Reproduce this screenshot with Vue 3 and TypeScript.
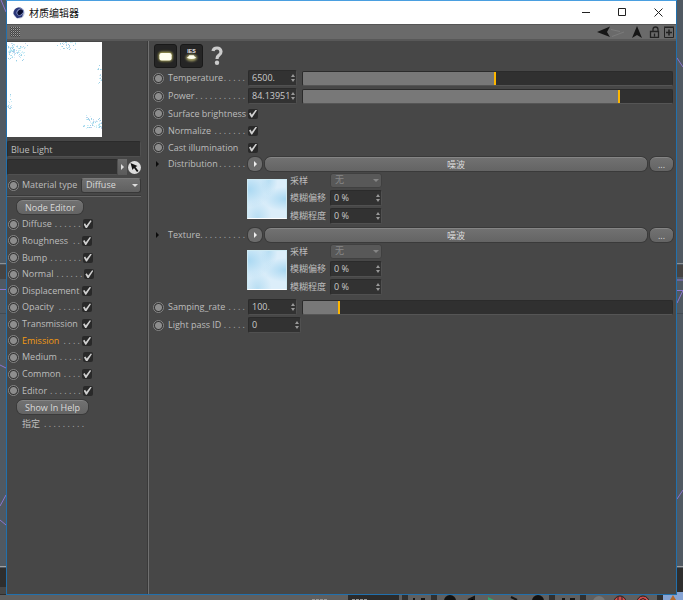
<script setup lang="ts">
import { computed, reactive, ref } from 'vue'

interface Channel {
  name: string
  dots: number
  on: boolean
}
interface TextureSlot {
  name: string
  dots: number
  shader: string
  sampling: string
  offset: string
  scale: string
}

const materialName = ref('Blue Light')
const layerName = ref('')
const materialType = ref('Diffuse')
const active = ref('Emission')

const channels = reactive<Channel[]>([
  { name: 'Diffuse', dots: 6, on: true },
  { name: 'Roughness', dots: 2, on: true },
  { name: 'Bump', dots: 7, on: true },
  { name: 'Normal', dots: 6, on: true },
  { name: 'Displacement', dots: 0, on: true },
  { name: 'Opacity', dots: 5, on: true },
  { name: 'Transmission', dots: 0, on: true },
  { name: 'Emission', dots: 4, on: true },
  { name: 'Medium', dots: 5, on: true },
  { name: 'Common', dots: 4, on: true },
  { name: 'Editor', dots: 7, on: true },
])

const levels = reactive([
  { name: 'Temperature', dots: 5, value: '6500.', level: 52 },
  { name: 'Power', dots: 11, value: '84.13951', level: 85.8 },
])
const flags = reactive([
  { name: 'Surface brightness', dots: 0, on: true },
  { name: 'Normalize', dots: 7, on: true },
  { name: 'Cast illumination', dots: 0, on: true },
])
const slots = reactive<TextureSlot[]>([
  { name: 'Distribution', dots: 6, shader: '噪波', sampling: '无', offset: '0 %', scale: '0 %' },
  { name: 'Texture', dots: 10, shader: '噪波', sampling: '无', offset: '0 %', scale: '0 %' },
])
const rate = reactive({ value: '100.', level: 9.5 })
const passId = ref('0')

const leader = (n: number): string => Array(n).fill('.').join(' ')

// Render noise of the preview: clusters of blue grains near the edges.
const grains = computed(() => {
  let seed = 7411
  const rnd = () => {
    seed = (seed * 16807) % 2147483647
    return seed / 2147483647
  }
  const colors = ['#a3dbee', '#c4ebf5', '#9ccde6', '#d3f3f8', '#e0f0fb', '#c0d4ee']
  const out: { x: number; y: number; c: string }[] = []
  const cluster = (n: number, x: number, y: number, w: number, h: number, cx: number, cy: number) => {
    for (let i = 0; i < n; i++) {
      const f = Math.sqrt(rnd())
      out.push({
        x: Math.round(x + w * (cx + (rnd() - cx) * f)),
        y: Math.round(y + h * (cy + (rnd() - cy) * f)),
        c: colors[Math.floor(rnd() * colors.length)],
      })
    }
  }
  cluster(130, 0, 0, 22, 20, 0.1, 0.3)
  cluster(34, 46, 0, 26, 8, 0.7, 0)
  cluster(28, 89, 22, 5, 22, 1, 0.6)
  cluster(80, 72, 72, 22, 15, 1, 0.8)
  cluster(20, 0, 45, 9, 26, 0, 0.7)
  return out
})
</script>

<template>
  <div class="desktop">
    <svg class="edge edge-left" viewBox="0 0 6 595" preserveAspectRatio="xMinYMin slice" aria-hidden="true">
      <rect width="6" height="600" fill="#505962" />
      <path d="M1 0L6 12M0 365l6 3M0 506l6-11M0 520l6 5" stroke="#8a76cf" fill="none" />
      <path d="M0 263.500h6" stroke="#8c9094" />
      <rect y="265" width="6" height="14" fill="#464443" />
      <path d="M0 289.500h6" stroke="#8a76cf" />
      <path d="M0 313.500h6" stroke="#434b53" />
      <path d="M0 566.500h6" stroke="#a0a0a0" />
      <rect y="568" width="6" height="27" fill="#2e2e2e" />
      <rect y="587" width="6" height="7" fill="#464646" />
    </svg>

    <main class="window">
      <header class="titlebar">
        <svg class="logo" viewBox="0 0 12 12" aria-hidden="true">
          <circle cx="6" cy="6" r="5.600" fill="#b9c0d6" />
          <path d="M.6 7A5.600 5.600 0 0 1 8 .8L11 4 9 10 4 11.200z" fill="#2b3778" />
          <ellipse cx="7.200" cy="5" rx="4" ry="3.200" fill="#8e9ccc" transform="rotate(-45 7.200 5)" />
          <ellipse cx="7.200" cy="5.200" rx="3.200" ry="2.300" fill="#080d32" transform="rotate(-45 7.200 5.200)" />
        </svg>
        <h1>材质编辑器</h1>
        <div class="window-buttons">
          <button type="button" aria-label="最小化"><svg viewBox="0 0 9 9"><path d="M0 4.500h8" /></svg></button>
          <button type="button" aria-label="最大化"><svg viewBox="0 0 9 9"><path d="M.5.5h7v7h-7z" /></svg></button>
          <button type="button" aria-label="关闭"><svg viewBox="0 0 9 9"><path d="M.5.5l8 8M8.500.5l-8 8" /></svg></button>
        </div>
      </header>

      <div class="toolbar">
        <span class="grip"></span>
        <div class="tools">
          <button type="button" aria-label="后退">
            <svg width="28" height="12" viewBox="0 0 28 12"><path d="M0 6L13 .5 10 6l3 5z" fill="#161616" /><path d="M14 3.500l9 2M15 10.500L27 6" stroke="#7b7b7b" fill="none" /></svg>
          </button>
          <button type="button" aria-label="向上">
            <svg width="12" height="12" viewBox="0 0 12 12"><path d="M6 0l5 12-5-3-5 3z" fill="#161616" /></svg>
          </button>
          <button type="button" aria-label="锁定">
            <svg width="11" height="12" viewBox="0 0 11 12" fill="none" stroke="#222"><path d="M1.500 5.500h8v6h-8zM4 5V3.500a2.500 2.500 0 0 1 5 0V5M5.500 7.500v3" stroke-width="1.300" /></svg>
          </button>
          <button type="button" aria-label="新建窗口">
            <svg width="10" height="12" viewBox="0 0 10 12" fill="none" stroke="#222"><path d="M.5 1.500h9v10h-9zM0 1h10" /><path d="M2 6.500h6M5 3.500v6" stroke-width="1.600" /></svg>
          </button>
        </div>
      </div>

      <div class="body">
        <aside class="side">
          <svg class="preview" viewBox="0 0 95 95" role="img" aria-label="Blue Light">
            <rect width="95" height="95" fill="#fff" />
            <rect v-for="(g, i) in grains" :key="i" :x="g.x" :y="g.y" width="1" height="1" :fill="g.c" />
          </svg>
          <input v-model="materialName" class="well name" type="text" aria-label="Name" />
          <div class="layer">
            <input v-model="layerName" class="well" type="text" aria-label="Layer" />
            <button class="layer-menu" type="button" aria-label="Layer menu"><svg width="3" height="6" viewBox="0 0 3 6"><path d="M0 0l3 3-3 3z" fill="#ddd" /></svg></button>
            <button class="picker" type="button" aria-label="Pick layer">
              <svg width="13" height="13" viewBox="0 0 13 13"><circle cx="6.500" cy="6.500" r="6.500" fill="#ddd" /><path d="M2.500 2l7 3-2 1 3 4-1.500 1-3-4L4.500 9z" fill="#111" /></svg>
            </button>
          </div>
          <div class="type-row">
            <i class="knob"></i>
            <label for="material-type">Material type</label>
            <span class="select">
              <select id="material-type" v-model="materialType"><option>Diffuse</option><option>Glossy</option></select>
              <svg class="caret" viewBox="0 0 6 3"><path d="M0 0h6L3 3z" /></svg>
            </span>
          </div>
          <hr />
          <button class="pill node" type="button">Node Editor</button>
          <div class="channels">
            <div v-for="(c, i) in channels" :key="c.name" class="channel" :class="{ active: c.name === active }">
              <i class="knob"></i>
              <label :for="`channel-${i}`">{{ c.name }}</label>
              <span v-if="c.dots" class="dots">{{ leader(c.dots) }}</span>
              <input :id="`channel-${i}`" v-model="c.on" class="tick" type="checkbox" />
            </div>
          </div>
          <button class="pill help" type="button">Show In Help</button>
          <div class="assign"><span>指定</span><span class="dots">{{ leader(9) }}</span></div>
        </aside>

        <section class="props">
          <div class="kinds">
            <button class="kind" type="button" aria-label="Blackbody">
              <svg viewBox="0 0 24 24">
                <defs><filter id="glow" x="-50%" y="-50%" width="200%" height="200%"><feGaussianBlur stdDeviation="1.500" /></filter></defs>
                <rect x="4" y="7" width="16" height="11" rx="4" fill="#a9a455" filter="url(#glow)" />
                <rect x="5" y="8.500" width="14" height="8.500" rx="2.500" fill="#fffff0" />
              </svg>
            </button>
            <button class="kind" type="button" aria-label="IES">
              <svg viewBox="0 0 24 24">
                <ellipse cx="12" cy="14" rx="6.500" ry="4" fill="#a39e65" filter="url(#glow)" />
                <path d="M6.500 14q1.500-.5 3-3h5q1.500 2.500 3 3-5.500 3-11 0z" fill="#fffff0" />
                <text x="12" y="8" text-anchor="middle">IES</text>
              </svg>
            </button>
            <button class="question" type="button" aria-label="Help">
              <svg viewBox="0 0 12 20"><path d="M2 5Q2.500 2 6 2t4 3.500Q10 8 8 9.200 6 10.500 6 13" fill="none" stroke="#ccc" stroke-width="3.200" /><circle cx="6" cy="16.800" r="2.200" fill="#ccc" /></svg>
            </button>
          </div>

          <div v-for="(l, i) in levels" :key="l.name" class="row">
            <i class="knob"></i>
            <div class="caption"><label :for="`level-${i}`">{{ l.name }}</label><span class="dots">{{ leader(l.dots) }}</span></div>
            <span class="number">
              <input :id="`level-${i}`" v-model="l.value" type="text" />
              <svg viewBox="0 0 4 8"><path d="M0 3l2-3 2 3zM0 5h4L2 8z" /></svg>
            </span>
            <input v-model.number="l.level" class="slider" type="range" min="0" max="100" step="0.1" :aria-label="l.name" :style="{ '--level': l.level + '%' }" />
          </div>

          <div v-for="(f, i) in flags" :key="f.name" class="row flag">
            <i class="knob"></i>
            <div class="caption"><label :for="`flag-${i}`">{{ f.name }}</label><span v-if="f.dots" class="dots">{{ leader(f.dots) }}</span></div>
            <input :id="`flag-${i}`" v-model="f.on" class="tick" type="checkbox" />
          </div>

          <div v-for="(s, i) in slots" :key="s.name" class="slot">
            <div class="row head">
              <svg class="expander" viewBox="0 0 3 6"><path d="M0 0l3 3-3 3z" fill="#0c0c0c" /></svg>
              <div class="caption"><span>{{ s.name }}</span><span class="dots">{{ leader(s.dots) }}</span></div>
              <button class="round" type="button" :aria-label="`${s.name} menu`"><svg width="3" height="6" viewBox="0 0 3 6"><path d="M0 0l3 3-3 3z" fill="#eee" /></svg></button>
              <button class="pill shader" type="button">{{ s.shader }}</button>
              <button class="pill more" type="button">...</button>
            </div>
            <div class="detail">
              <div class="swatch"></div>
              <div class="fields">
                <label :for="`sampling-${i}`">采样</label>
                <span class="select off">
                  <select :id="`sampling-${i}`" v-model="s.sampling" disabled><option>无</option></select>
                  <svg class="caret" viewBox="0 0 6 3"><path d="M0 0h6L3 3z" /></svg>
                </span>
                <label :for="`offset-${i}`">模糊偏移</label>
                <span class="number">
                  <input :id="`offset-${i}`" v-model="s.offset" type="text" />
                  <svg viewBox="0 0 4 8"><path d="M0 3l2-3 2 3zM0 5h4L2 8z" /></svg>
                </span>
                <label :for="`scale-${i}`">模糊程度</label>
                <span class="number">
                  <input :id="`scale-${i}`" v-model="s.scale" type="text" />
                  <svg viewBox="0 0 4 8"><path d="M0 3l2-3 2 3zM0 5h4L2 8z" /></svg>
                </span>
              </div>
            </div>
          </div>

          <div class="row">
            <i class="knob"></i>
            <div class="caption"><label for="rate">Samping_rate</label><span class="dots">{{ leader(4) }}</span></div>
            <span class="number">
              <input id="rate" v-model="rate.value" type="text" />
              <svg viewBox="0 0 4 8"><path d="M0 3l2-3 2 3zM0 5h4L2 8z" /></svg>
            </span>
            <input v-model.number="rate.level" class="slider" type="range" min="0" max="100" step="0.1" aria-label="Samping_rate" :style="{ '--level': rate.level + '%' }" />
          </div>
          <div class="row">
            <i class="knob"></i>
            <div class="caption"><label for="pass-id">Light pass ID</label><span class="dots">{{ leader(5) }}</span></div>
            <span class="number wide">
              <input id="pass-id" v-model="passId" type="text" />
              <svg viewBox="0 0 4 8"><path d="M0 3l2-3 2 3zM0 5h4L2 8z" /></svg>
            </span>
          </div>
        </section>
      </div>
    </main>

    <svg class="edge edge-right" viewBox="0 0 6 595" preserveAspectRatio="xMinYMin slice" aria-hidden="true">
      <rect width="6" height="600" fill="#505962" />
      <path d="M0 58l6 9M0 280h6M0 290.500h6L0 303M0 499l6-9" stroke="#8a76cf" fill="none" />
      <path d="M0 263.500h6" stroke="#8c9094" />
      <rect y="265" width="6" height="12" fill="#464443" />
      <path d="M0 313.500h6" stroke="#434b53" />
      <path d="M0 566.500h6" stroke="#a0a0a0" />
      <rect y="568" width="6" height="24" fill="#2e2e2e" />
      <rect y="592" width="6" height="3" fill="#86a4d4" />
    </svg>

    <svg class="strip" viewBox="0 0 683 5" preserveAspectRatio="xMaxYMax slice" aria-hidden="true">
      <rect width="683" height="5" fill="#5f5f5f" />
      <rect x="348" width="51" height="5" fill="#2b2b2b" />
      <path d="M312 4.500h16M352 4.500h16" stroke="#999" stroke-dasharray="3 1" />
      <path d="M405 0v5M434 0v5M552 0v5M583 0v5M660 0v5" stroke="#303030" stroke-width="6" />
      <path d="M413 4h2m6 0h4M468 5l6-3v3M511 2l6 3M562 4h3m5 0h5" stroke="#151515" stroke-width="2" />
      <circle cx="450" cy="6" r="6" fill="#111" /><circle cx="538" cy="6" r="6" fill="#111" />
      <path d="M488 2l6 3h-6z" fill="#35a36c" />
      <circle cx="599" cy="7" r="6" fill="#777" />
      <circle cx="620" cy="7" r="6" fill="#d04a4a" stroke="#222" /><circle cx="643" cy="7" r="6" fill="#d04a4a" stroke="#222" />
      <path d="M618 5V2M622 5V2M640 5q3-3 6 0" stroke="#222" fill="none" />
      <rect x="663" width="20" height="5" fill="#86a4d4" /><path d="M673 0l3 5h-6z" fill="#b36a2e" />
    </svg>
  </div>
</template>

<style>
body {
  background: #505962;
}
</style>

<style scoped>
* {
  box-sizing: border-box;
}
.desktop {
  min-height: 100vh;
  display: grid;
  grid-template: 1fr 5px / 6px minmax(0, 1fr) 6px;
  font: 9px/12px 'Open Sans', 'Noto Sans CJK SC', sans-serif;
  color: #bdbdbd;
}
.edge {
  width: 6px;
  height: 0;
  min-height: 100%;
  grid-row: 1;
}
.edge-left {
  grid-column: 1;
}
.edge-right {
  grid-column: 3;
}
.strip {
  grid-column: 1 / -1;
  width: 100%;
  height: 5px;
}
.window {
  grid-row: 1;
  grid-column: 2;
  display: flex;
  flex-direction: column;
  border: 1px solid #2170ad;
  border-top-color: #4a9fe0;
  background: #474747;
}
button,
input,
select {
  font: inherit;
  color: inherit;
  margin: 0;
  padding: 0;
  border: 0;
  background: none;
  min-width: 0;
}
svg {
  display: block;
}
.titlebar {
  height: 23px;
  display: flex;
  align-items: center;
  gap: 4px;
  padding-left: 6px;
  background: #fff;
  color: #111;
}
.logo {
  width: 12px;
  height: 12px;
}
h1 {
  margin: 0;
  font: 10px/14px 'Noto Sans CJK SC', sans-serif;
}
.window-buttons {
  margin-left: auto;
  display: flex;
}
.window-buttons button {
  width: 36px;
  height: 23px;
  display: grid;
  place-items: center;
}
.window-buttons svg {
  width: 9px;
  height: 9px;
  fill: none;
  stroke: #222;
}
.toolbar {
  height: 17px;
  display: flex;
  align-items: center;
  justify-content: space-between;
  padding: 0 2px 0 3px;
  background: #6a6a6a;
  border-top: 1px solid #555;
  border-bottom: 2px solid #585858;
}
.grip {
  width: 10px;
  height: 10px;
  background: conic-gradient(#a0a0a0 25%, #454545 0 50%, #6a6a6a 0 75%, #454545 0) 0 0 / 2px 2px;
}
.tools {
  display: flex;
  align-items: center;
  gap: 4px;
}
.tools button:nth-child(2) {
  margin: 0 2px;
}
.body {
  flex: 1;
  display: flex;
}
.side {
  width: 142px;
  flex: none;
  border-right: 1px solid #707070;
  box-shadow: inset -1px 0 #3a3a3a;
  padding: 1px 7px 8px 0;
  display: flex;
  flex-direction: column;
  align-items: flex-start;
}
.preview {
  width: 95px;
  height: 95px;
}
.well {
  height: 16px;
  padding: 0 3px;
  background: #323232;
  border: 1px solid #2b2b2b;
  border-right-color: #505050;
  border-bottom-color: #505050;
  border-radius: 2px;
}
.name {
  width: 100%;
  margin: 4px 0 2px;
}
.layer {
  width: 100%;
  display: flex;
  align-items: center;
}
.layer .well {
  flex: 1;
}
.layer-menu {
  width: 9px;
  height: 16px;
  display: grid;
  place-items: center;
  background: linear-gradient(#6c6c6c, #5a5a5a);
}
.picker {
  margin-left: 1px;
}
.type-row {
  width: 100%;
  height: 20px;
  display: flex;
  align-items: center;
  gap: 3px;
  padding-left: 1px;
  white-space: nowrap;
}
.knob {
  width: 11px;
  height: 11px;
  flex: none;
  border-radius: 50%;
  border: 1px solid #858585;
  background: radial-gradient(circle, #8d8d8d 3px, #333 4px);
}
.select {
  position: relative;
  display: block;
  width: 60px;
  height: 15px;
  margin-left: auto;
}
.select select {
  display: block;
  width: 100%;
  height: 100%;
  padding: 0 12px 1px 4px;
  appearance: none;
  border-radius: 3px;
  background: linear-gradient(#707070, #606060);
  border: 1px solid #383838;
  border-top-color: #7a7a7a;
  color: #dadada;
  opacity: 1;
}
.caret {
  position: absolute;
  right: 3px;
  top: 6px;
  width: 6px;
  height: 3px;
  fill: #ddd;
  pointer-events: none;
}
.select.off {
  width: 52px;
  margin: 0;
}
.select.off select {
  background: #585858;
  border-color: #404040;
  color: #878787;
}
.select.off .caret {
  fill: #858585;
}
hr {
  width: 100%;
  height: 2px;
  margin: 0 0 3px;
  border: 0;
  border-top: 1px solid #3a3a3a;
  border-bottom: 1px solid #666;
}
.pill {
  height: 14px;
  padding: 0 8px;
  line-height: 12px;
  border-radius: 6px;
  background: linear-gradient(#717171, #646464);
  border-top: 1px solid #858585;
  box-shadow: 0 0 0 1px #3a3a3a;
  color: #dadada;
}
.node {
  margin-left: 10px;
}
.channels {
  width: 85px;
  height: 183px;
  margin: 2px 0 1px;
  padding-left: 1px;
  display: grid;
  grid-template-columns: minmax(0, 1fr);
  grid-auto-rows: 1fr;
}
.channel {
  display: flex;
  align-items: center;
  gap: 3px;
  white-space: nowrap;
}
.caption .dots {
  margin-left: auto;
}
.channel label {
  margin-right: auto;
}
.channel .tick {
  margin-left: -1px;
}
.active label {
  color: #f39a12;
}
.help {
  margin-left: 10px;
}
.assign {
  display: flex;
  gap: 4px;
  margin: 4px 0 0 15px;
}
.dots {
  white-space: pre;
  color: #a8a8a8;
}
.tick {
  appearance: none;
  width: 10px;
  height: 10px;
  flex: none;
  display: grid;
  place-items: center;
  background: #292929;
  border-radius: 2px;
}
.tick:checked::before {
  content: '';
  width: 8px;
  height: 8px;
  background: #d0d0d0;
  clip-path: polygon(0 50%, 18% 38%, 35% 65%, 85% 0, 100% 8%, 40% 100%, 28% 100%);
}
.props {
  flex: 1;
  min-width: 0;
  padding: 3px 3px 8px 4px;
}
.kinds {
  display: flex;
  gap: 3px;
  padding-left: 1px;
  margin-bottom: 1px;
}
.kind {
  width: 23px;
  height: 24px;
  background: #252525;
  border: 1px solid #191919;
  border-radius: 3px;
}
.kind svg {
  width: 21px;
  height: 22px;
}
.kind text {
  font: bold 6px 'Liberation Sans', sans-serif;
  fill: #eee;
}
.question {
  margin-left: 5px;
}
.question svg {
  width: 12px;
  height: 20px;
}
.row {
  height: 18px;
  display: flex;
  align-items: center;
  gap: 3px;
}
.row .knob {
  margin-right: 1px;
}
.row.flag {
  height: 17px;
}
.row.head {
  height: 16px;
}
.caption {
  width: 77px;
  flex: none;
  display: flex;
  white-space: nowrap;
}
.number {
  display: flex;
  align-items: center;
  width: 49px;
  height: 16px;
  flex: none;
  padding: 0 1px 0 3px;
  background: #323232;
  border: 1px solid #2b2b2b;
  border-right-color: #505050;
  border-bottom-color: #505050;
  border-radius: 2px;
  color: #cacaca;
}
.number input {
  flex: 1;
  width: 0;
}
.number svg {
  width: 4px;
  height: 8px;
  fill: #999;
}
.number.wide {
  width: 53px;
}
.slider {
  appearance: none;
  flex: 1;
  height: 15px;
  margin-left: 2px;
  background: linear-gradient(90deg, #787878 var(--level), #303030 var(--level));
  border: 1px solid #2b2b2b;
  border-bottom-color: #555;
  border-radius: 2px;
}
.slider::-webkit-slider-thumb {
  appearance: none;
  width: 2px;
  height: 13px;
  background: #fdb600;
}
.expander {
  width: 3px;
  height: 6px;
  margin: 0 6px 0 3px;
}
.round {
  width: 14px;
  height: 14px;
  flex: none;
  display: grid;
  place-items: center;
  border-radius: 6px;
  background: #6c6c6c;
  box-shadow: 0 0 0 1px #3a3a3a;
}
.shader {
  flex: 1;
}
.more {
  width: 23px;
}
.detail {
  display: flex;
  gap: 3px;
  margin: 1px 0 3px 94px;
}
.swatch {
  width: 40px;
  height: 40px;
  margin-top: 6px;
  border: 1px solid #cfeaf3;
  border-bottom-color: #fff;
  background:
    radial-gradient(ellipse at 0% 25%, #a9d8f2 0, transparent 45%),
    radial-gradient(ellipse at 100% 50%, #a9d8f2 0, transparent 45%),
    radial-gradient(ellipse at 55% 0%, #b8def3 0, transparent 30%),
    radial-gradient(ellipse at 25% 100%, #b8def3 0, transparent 35%),
    #dceefa;
}
.fields {
  display: grid;
  grid-template: 15px 16px 16px / 37px 52px;
  gap: 2px 3px;
  align-content: start;
  align-items: center;
}
.fields .number {
  width: 52px;
}
</style>
